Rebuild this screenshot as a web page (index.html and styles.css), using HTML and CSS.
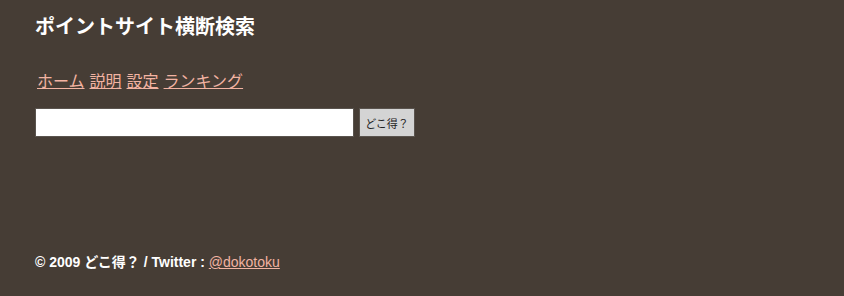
FILE: index.html
```html
<!DOCTYPE html>
<html lang="ja">
<head>
<meta charset="utf-8">
<title>ポイントサイト横断検索</title>
<link rel="stylesheet" href="styles.css">
</head>
<body>
<div class="page">
  <h1 class="title">ポイントサイト横断検索</h1>
  <nav class="nav">
    <a href="#">ホーム</a>
    <a href="#">説明</a>
    <a href="#">設定</a>
    <a href="#">ランキング</a>
  </nav>
  <form class="search">
    <input class="search-input" type="text">
    <button class="search-btn" type="button">どこ得？</button>
  </form>
  <footer class="footer">© 2009 どこ得？ / Twitter : <a href="#">@dokotoku</a></footer>
</div>
</body>
</html>
```
FILE: styles.css
```css
html, body {
  margin: 0;
  padding: 0;
  background: #463d35;
}
body {
  font-family: "Liberation Sans", "Noto Sans CJK JP", sans-serif;
  color: #ffffff;
}
.page {
  padding: 13px 35px 0 35px;
  display: flex;
  flex-direction: column;
  height: 283px;
}
.title {
  margin: 0;
  font-size: 20px;
  line-height: 28px;
  font-weight: bold;
}
.nav {
  margin-top: 31px;
  padding-left: 2px;
  display: flex;
  gap: 5px;
  font-size: 16px;
  line-height: 20px;
}
.nav a, .footer a {
  color: #f2b3a2;
  text-decoration: underline;
}
.footer a {
  font-weight: normal;
}
.search {
  margin: 16px 0 0 0;
  display: flex;
  gap: 5px;
}
.search-input {
  box-sizing: border-box;
  width: 319px;
  height: 29px;
  margin: 0;
  border: 1px solid #5a544e;
  background: #fff;
}
.search-btn {
  box-sizing: border-box;
  width: 56px;
  height: 29px;
  margin: 0;
  padding: 0;
  border: 1px solid #5a544e;
  background: #d4d4d4;
  color: #222;
  font-family: "Liberation Sans", "Noto Sans CJK JP", sans-serif;
  font-size: 11px;
}
.footer {
  margin-top: auto;
  margin-bottom: 25px;
  font-size: 14px;
  line-height: 18px;
  font-weight: bold;
}
```
